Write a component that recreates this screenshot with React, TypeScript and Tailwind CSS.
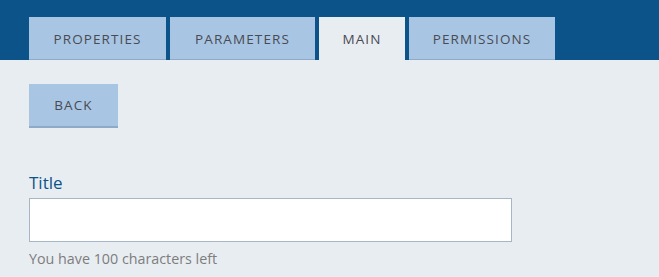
import React from "react";

const tabs = [
  { label: "PROPERTIES", w: "w-[137px]", active: false },
  { label: "PARAMETERS", w: "w-[145px]", active: false },
  { label: "MAIN", w: "w-[86px]", active: true },
  { label: "PERMISSIONS", w: "w-[146px]", active: false },
];

export default function App() {
  return (
    <div className="w-[659px] h-[277px] bg-[#e8edf2] overflow-hidden" style={{ fontFamily: "'Open Sans', 'Noto Sans', sans-serif" }}>
      <div className="bg-[#0b5388] h-[60px] pl-[29px] pt-[17px] flex gap-[4px]">
        {tabs.map((t) => (
          <div
            key={t.label}
            className={
              t.active
                ? `${t.w} h-[43px] bg-[#e8edf2] flex items-center justify-center text-[13.5px] leading-[16px] tracking-[1.1px] text-[#4a4a52]`
                : `${t.w} h-[43px] bg-[#a8c6e4] border-b border-[#8faac6] flex items-center justify-center text-[13.5px] leading-[16px] tracking-[1.1px] text-[#4a4a52]`
            }
          >
            <span className="pt-[1px]">{t.label}</span>
          </div>
        ))}
      </div>
      <div className="pl-[29px] pt-[24px]">
        <button className="w-[89px] h-[44px] bg-[#a8c6e4] border-b-2 border-[#8faac6] text-[13.5px] tracking-[1.1px] text-[#4a4a52] flex items-center justify-center">
          BACK
        </button>
        <div className="mt-[44px] text-[17px] leading-[22px] text-[#0b5388]">Title</div>
        <input className="mt-[4px] block w-[483px] h-[44px] bg-white border border-[#a7b6c6] outline-none" />
        <div className="mt-[8px] text-[14.3px] leading-[18px] text-[#7d7d7d]">You have 100 characters left</div>
      </div>
    </div>
  );
}
